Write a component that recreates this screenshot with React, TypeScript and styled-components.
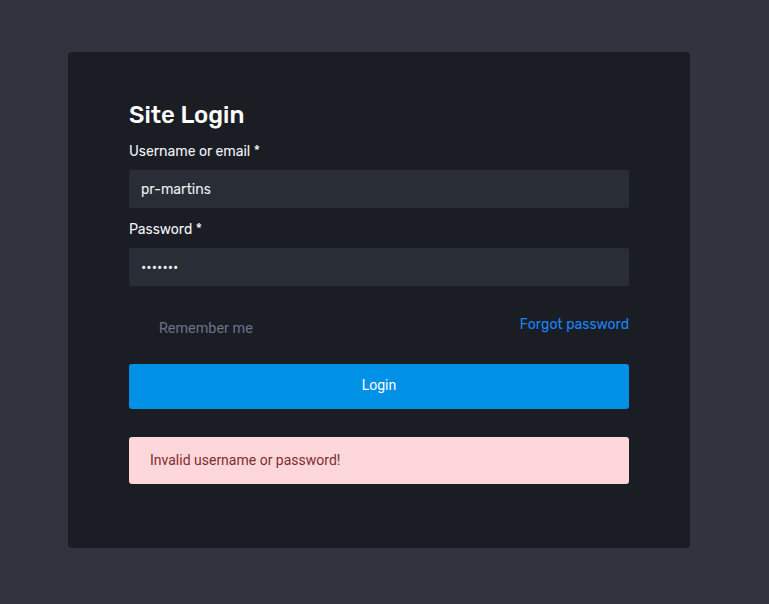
import React, { FC } from 'react';
import styled, { createGlobalStyle } from 'styled-components';

const GlobalStyle = createGlobalStyle`
  html, body {
    margin: 0;
    padding: 0;
    background: #31343f;
    font-family: Roboto, "Liberation Sans", sans-serif;
  }
`;

const Page = styled.div`
  padding: 52px 0 56px 68px;
`;

const Card = styled.div`
  width: 622px;
  height: 496px;
  box-sizing: border-box;
  background: #1b1d25;
  border-radius: 4px;
  padding: 48px 61px 0 61px;
`;

const Title = styled.h1`
  margin: 0 0 12px 0;
  font-family: Rubik, Inter, Roboto, sans-serif;
  font-size: 24px;
  line-height: 30px;
  font-weight: 500;
  color: #ffffff;
`;

const Label = styled.label`
  display: block;
  font-family: Rubik, Inter, Roboto, sans-serif;
  font-size: 14px;
  line-height: 20px;
  color: #f2f4f7;
  margin-bottom: 8px;
`;

const Field = styled.div`
  margin-bottom: 12px;
`;

const Input = styled.input`
  display: block;
  width: 100%;
  height: 38px;
  box-sizing: border-box;
  border: none;
  border-radius: 2px;
  background: #292e36;
  color: #eef0f3;
  padding: 0 12px;
  font-family: Rubik, Inter, Roboto, sans-serif;
  font-size: 14px;
  outline: none;
`;

const OptionsRow = styled.div`
  display: flex;
  justify-content: space-between;
  align-items: center;
  margin-top: 26px;
  height: 30px;
`;

const Remember = styled.span`
  padding-left: 30px;
  padding-top: 2px;
  font-size: 14.4px;
  color: #6c7287;
`;

const ForgotLink = styled.a`
  font-family: Rubik, Inter, Roboto, sans-serif;
  font-size: 14px;
  color: #1a84f5;
  text-decoration: none;
  margin-top: -6px;
`;

const LoginButton = styled.button`
  display: block;
  width: 100%;
  height: 45px;
  margin-top: 22px;
  padding: 0 0 3px 0;
  border: none;
  border-radius: 3px;
  background: #0090e6;
  color: #ffffff;
  font-family: Roboto, sans-serif;
  font-size: 14px;
`;

const Alert = styled.div`
  margin-top: 28px;
  height: 47px;
  box-sizing: border-box;
  display: flex;
  align-items: center;
  padding: 0 21px 2px 21px;
  background: #fdd7da;
  border-radius: 3px;
  color: #832a2d;
  font-size: 14px;
`;

const App: FC = () => (
  <Page>
    <GlobalStyle />
    <Card>
      <Title>Site Login</Title>
      <Field>
        <Label>Username or email *</Label>
        <Input defaultValue="pr-martins" />
      </Field>
      <Field>
        <Label>Password *</Label>
        <Input type="password" defaultValue="1234567" />
      </Field>
      <OptionsRow>
        <Remember>Remember me</Remember>
        <ForgotLink href="#">Forgot password</ForgotLink>
      </OptionsRow>
      <LoginButton>Login</LoginButton>
      <Alert>Invalid username or password!</Alert>
    </Card>
  </Page>
);

export default App;
